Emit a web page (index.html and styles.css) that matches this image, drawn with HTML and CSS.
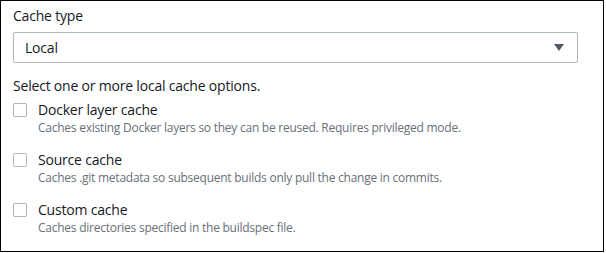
FILE: index.html
```html
<!DOCTYPE html>
<html>
<head>
<meta charset="utf-8">
<link rel="stylesheet" href="styles.css">
</head>
<body>
<div class="frame">
  <div class="field">
    <div class="label">Cache type</div>
    <div class="select">
      <span class="value">Local</span>
      <svg class="caret" width="10" height="7" viewBox="0 0 10 7"><polygon points="0,0 10,0 5,7" fill="#545b64"/></svg>
    </div>
  </div>
  <div class="group">
    <div class="group-label">Select one or more local cache options.</div>
    <div class="option">
      <span class="box"></span>
      <div class="text">
        <div class="name">Docker layer cache</div>
        <div class="desc">Caches existing Docker layers so they can be reused. Requires privileged mode.</div>
      </div>
    </div>
    <div class="option">
      <span class="box"></span>
      <div class="text">
        <div class="name">Source cache</div>
        <div class="desc">Caches .git metadata so subsequent builds only pull the change in commits.</div>
      </div>
    </div>
    <div class="option">
      <span class="box"></span>
      <div class="text">
        <div class="name">Custom cache</div>
        <div class="desc">Caches directories specified in the buildspec file.</div>
      </div>
    </div>
  </div>
</div>
</body>
</html>
```
FILE: styles.css
```css
html, body { margin: 0; padding: 0; background: #fff; }
body { font-family: "Open Sans", "Noto Sans", sans-serif; color: #16191f; }
.frame {
  box-sizing: border-box;
  width: 604px;
  height: 252px;
  border: 1px solid #000;
  padding: 5px 25px 0 12px;
}
.label { font-size: 14px; line-height: 20px; height: 20px; margin-bottom: 6px; letter-spacing: -0.2px; }
.select {
  box-sizing: border-box;
  height: 31px;
  border: 1px solid #aab7b8;
  border-radius: 2px;
  display: flex;
  align-items: center;
  justify-content: space-between;
  padding: 0 13px 0 11px;
}
.value { font-size: 14px; line-height: 20px; letter-spacing: -0.2px; }
.caret { display: block; }
.group { margin-top: 13px; }
.group-label { font-size: 14px; line-height: 20px; margin-bottom: 4px; letter-spacing: -0.2px; }
.option { display: flex; align-items: flex-start; gap: 11px; height: 50px; }
.box {
  box-sizing: border-box;
  width: 14px; height: 14px;
  margin-top: 3px;
  border: 1px solid #aab7b8;
  border-radius: 2px;
  flex: none;
}
.name { font-size: 14px; line-height: 20px; letter-spacing: -0.2px; }
.desc { font-size: 12px; line-height: 16px; color: #687078; letter-spacing: -0.25px; }
```
